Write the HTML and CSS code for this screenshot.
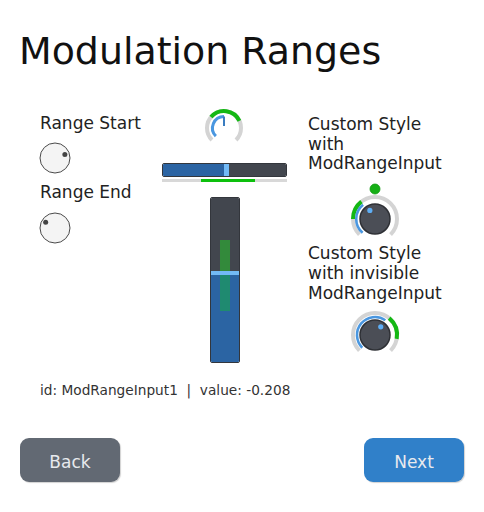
FILE: index.html
```html
<!DOCTYPE html>
<html>
<head>
<meta charset="utf-8">
<link rel="stylesheet" href="styles.css">
</head>
<body>
<div class="page">
  <h1 class="title">Modulation Ranges</h1>
  <div class="demo">
    <div class="col col-left">
      <div class="label">Range Start</div>
      <svg class="dial" width="32" height="32" viewBox="0 0 32 32">
        <circle cx="16" cy="16" r="15" fill="#f4f4f4" stroke="#4a4a4a" stroke-width="1"/>
        <circle cx="25.87" cy="12.41" r="2.5" fill="#444"/>
      </svg>
      <div class="label label-end">Range End</div>
      <svg class="dial" width="32" height="32" viewBox="0 0 32 32">
        <circle cx="16" cy="16" r="15" fill="#f4f4f4" stroke="#4a4a4a" stroke-width="1"/>
        <circle cx="6.67" cy="10.17" r="2.5" fill="#444"/>
      </svg>
    </div>
    <div class="col col-mid">
      <svg class="arcknob" width="44" height="44" viewBox="0 0 44 44">
        <path d="M9.98 34.02 A17 17 0 1 1 34.02 34.02" fill="none" stroke="#d4d4d4" stroke-width="4"/>
        <path d="M8.98 11.07 A17 17 0 0 1 37.41 14.82" fill="none" stroke="#14b814" stroke-width="4"/>
        <path d="M13.87 30.13 A11.5 11.5 0 0 1 22 10.5" fill="none" stroke="#4a97e0" stroke-width="3"/>
        <line x1="22" y1="10.5" x2="22" y2="20" stroke="#3a7cc0" stroke-width="2"/>
      </svg>
      <div class="hslider">
        <div class="hfill"></div>
        <div class="hhandle"></div>
        <div class="hrest"></div>
      </div>
      <div class="hrange"><div class="hrange-fill"></div></div>
      <div class="vslider">
        <div class="vrest"></div>
        <div class="vhandle"></div>
        <div class="vfill"></div>
        <div class="vmod vmod-top"></div>
        <div class="vmod vmod-bottom"></div>
      </div>
    </div>
    <div class="col col-right">
      <div class="label">Custom Style<br>with<br>ModRangeInput</div>
      <svg class="knob knob-one" width="60" height="62" viewBox="0 0 60 62">
        <circle cx="30" cy="7" r="5" fill="#16b016" stroke="#0f9a0f" stroke-width="0.8"/>
        <path d="M14.44 52.56 A22 22 0 1 1 45.56 52.56" fill="none" stroke="#d4d4d4" stroke-width="4"/>
        <path d="M8 37 A22 22 0 0 1 16.45 19.66" fill="none" stroke="#14b814" stroke-width="4"/>
        <path d="M17.62 50.75 A18 18 0 0 1 18.11 22.83" fill="none" stroke="#4a97e0" stroke-width="2.6"/>
        <circle cx="30" cy="37" r="15" fill="#4b4e56" stroke="#2e3035" stroke-width="1.5"/>
        <circle cx="24.85" cy="28.43" r="2.6" fill="#5eaef5"/>
      </svg>
      <div class="label">Custom Style<br>with invisible<br>ModRangeInput</div>
      <svg class="knob knob-two" width="60" height="56" viewBox="0 0 60 56">
        <path d="M14.44 43.56 A22 22 0 1 1 45.56 43.56" fill="none" stroke="#d4d4d4" stroke-width="4"/>
        <path d="M44.14 11.15 A22 22 0 0 1 51.67 31.82" fill="none" stroke="#14b814" stroke-width="4"/>
        <path d="M17.27 40.73 A18 18 0 0 1 40.32 13.26" fill="none" stroke="#4a97e0" stroke-width="2.6"/>
        <circle cx="30" cy="28" r="15" fill="#4b4e56" stroke="#2e3035" stroke-width="1.5"/>
        <circle cx="35.74" cy="19.81" r="2.6" fill="#5eaef5"/>
      </svg>
    </div>
  </div>
  <div class="info">id: ModRangeInput1&nbsp; |&nbsp; value: -0.208</div>
  <div class="nav">
    <button class="btn btn-back">Back</button>
    <button class="btn btn-next">Next</button>
  </div>
</div>
</body>
</html>
```
FILE: styles.css
```css
html, body {
  margin: 0;
  padding: 0;
  background: #ffffff;
}
body {
  font-family: "DejaVu Sans", sans-serif;
  color: #222;
}
.page {
  width: 484px;
  height: 512px;
  padding: 0 20px;
  box-sizing: border-box;
  display: flex;
  flex-direction: column;
}
.title {
  margin: 29px 0 0 -1px;
  font-size: 37.9px;
  line-height: 44px;
  font-weight: normal;
  color: #111;
}
.demo {
  margin-top: 31px;
  padding-left: 20px;
  display: flex;
  align-items: flex-start;
  height: 259px;
}
.col {
  display: flex;
  flex-direction: column;
}
.col-left {
  width: 122px;
  padding-top: 9.7px;
}
.label {
  font-size: 17px;
  line-height: 19.7px;
  color: #222;
  white-space: nowrap;
}
.dial {
  display: block;
  margin: 8.5px 0 0 -1px;
}
.label-end {
  margin-top: 9.5px;
}
.col-mid {
  width: 125px;
  align-items: center;
}
.arcknob {
  display: block;
  margin-top: 1.5px;
  margin-left: -2px;
}
.hslider {
  margin-top: 13.5px;
  width: 125px;
  height: 14px;
  box-sizing: border-box;
  border: 1px solid #33363c;
  border-radius: 2px;
  display: flex;
  overflow: hidden;
}
.hfill {
  width: 61px;
  background: #2b64a3;
}
.hhandle {
  width: 5px;
  background: #72baf6;
}
.hrest {
  flex: 1;
  background: #42464e;
}
.hrange {
  margin-top: 2px;
  width: 125px;
  height: 3px;
  background: #d8d8d8;
  display: flex;
}
.hrange-fill {
  margin-left: 39px;
  width: 54px;
  background: #0dc00d;
}
.vslider {
  margin-top: 15px;
  width: 30px;
  height: 166px;
  box-sizing: border-box;
  border: 1px solid #33363c;
  border-radius: 2px;
  display: flex;
  flex-direction: column;
  position: relative;
  overflow: hidden;
}
.vrest {
  height: 73px;
  background: #42464e;
}
.vhandle {
  height: 4px;
  background: #72baf6;
}
.vfill {
  flex: 1;
  background: #2b64a3;
}
.vmod {
  position: absolute;
  left: 9px;
  width: 10px;
}
.vmod-top {
  top: 42px;
  height: 31px;
  background: #338a3b;
}
.vmod-bottom {
  top: 77px;
  height: 36px;
  background: #1f8a70;
}
.col-right {
  margin-left: 21px;
  padding-top: 10.8px;
}
.knob {
  display: block;
  margin-left: 37px;
}
.knob-one {
  margin-top: 8.5px;
}
.knob-two {
  margin-top: 3.5px;
}
.info {
  margin-top: 19px;
  padding-left: 20px;
  font-size: 13.7px;
  line-height: 17px;
  color: #333;
  white-space: nowrap;
}
.nav {
  margin-top: 39px;
  display: flex;
  justify-content: space-between;
}
.btn {
  width: 100px;
  height: 44px;
  border: none;
  border-radius: 9px;
  font-family: "DejaVu Sans", sans-serif;
  font-size: 17px;
  line-height: 44px;
  padding: 2px 0 0 0;
  color: #e8eaee;
  box-shadow: 1px 1px 1px rgba(0, 0, 0, 0.18);
}
.btn-back {
  background: #626973;
}
.btn-next {
  background: #3080c9;
}
```
